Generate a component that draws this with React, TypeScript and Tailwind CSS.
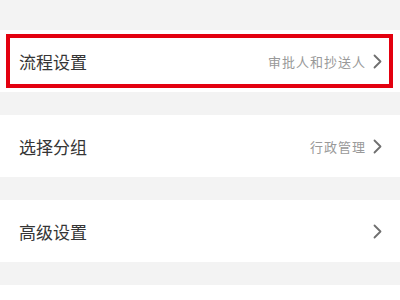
import React from "react";

const Chevron = () => (
  <svg width="9" height="15" viewBox="0 0 9 15" fill="none" className="shrink-0">
    <polyline points="1.5,1.5 7.5,7.5 1.5,13.5" stroke="#6f6f6f" strokeWidth="1.8" strokeLinecap="round" strokeLinejoin="round" />
  </svg>
);

const font = { fontFamily: '"Noto Sans CJK SC", "Noto Sans", sans-serif' };

function RowContent({ label, value }: { label: string; value?: string }) {
  return (
    <div className="flex h-full items-center justify-between">
      <span className="text-[17px] leading-none text-[#353535]">{label}</span>
      <div className="flex items-center gap-[7px]">
        {value && <span className="text-[13px] leading-none tracking-[1px] text-[#999999]">{value}</span>}
        <Chevron />
      </div>
    </div>
  );
}

export default function App() {
  return (
    <div className="w-[400px] h-[300px] overflow-hidden bg-[#f3f3f3] pt-[30px] flex flex-col gap-[23px]" style={font}>
      <div className="h-[62px] shrink-0 bg-white pl-[6px] pr-[7px] py-[4px]">
        <div className="h-full border-4 border-[#e3000f] pl-[9px] pr-[7px]">
          <RowContent label="流程设置" value="审批人和抄送人" />
        </div>
      </div>
      <div className="h-[62px] shrink-0 bg-white pl-[19px] pr-[18px]">
        <RowContent label="选择分组" value="行政管理" />
      </div>
      <div className="h-[62px] shrink-0 bg-white pl-[19px] pr-[18px]">
        <RowContent label="高级设置" />
      </div>
      <div className="h-[30px] shrink-0 bg-white" />
    </div>
  );
}
